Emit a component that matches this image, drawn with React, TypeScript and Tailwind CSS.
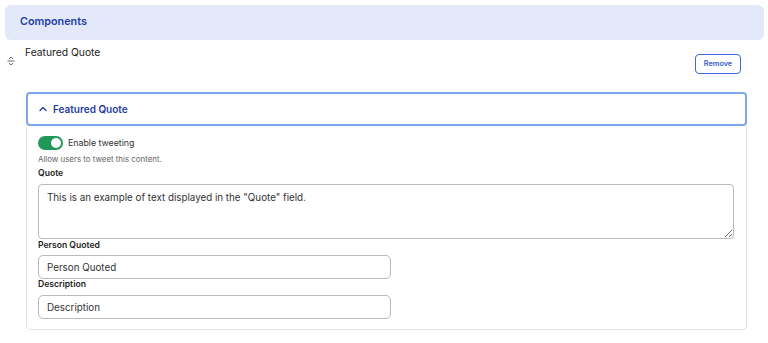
import { useState } from "react";

function DragHandle() {
  return (
    <svg width="10" height="10" viewBox="0 0 10 10" fill="none" stroke="#555" strokeWidth="0.9">
      <path d="M3 3l2-2 2 2" />
      <path d="M1.5 5h7" />
      <path d="M3 7l2 2 2-2" />
    </svg>
  );
}

function Chevron() {
  return (
    <svg width="10" height="10" viewBox="0 0 10 10" fill="none" stroke="#1e3a9f" strokeWidth="1.3" strokeLinecap="round" strokeLinejoin="round">
      <path d="M2 6.5l3-3 3 3" />
    </svg>
  );
}

export default function App() {
  const [tweeting, setTweeting] = useState(true);

  return (
    <div className="w-[768px] h-[343px] bg-white pt-[5px] px-[5px] font-['Inter',sans-serif] text-[#222]">
      <div className="w-[759px] h-[35px] rounded-md bg-[#e3e9f9] flex items-center pl-[15px]">
        <span className="text-[10.8px] font-semibold text-[#1f3fa6]">Components</span>
      </div>

      <div className="flex">
        <div className="w-[20px] pt-[16px] pl-[1px]">
          <DragHandle />
        </div>
        <div className="flex-1">
          <div className="flex items-start justify-between pr-[22px]">
            <span className="text-[10.3px] leading-[15px] pt-[5px]">Featured Quote</span>
            <button className="mt-[14px] w-[46px] h-[20px] rounded-[4px] border border-[#4066e0] text-[7.3px] font-semibold text-[#3558cf] bg-white">
              Remove
            </button>
          </div>

          <div className="mt-[18px] w-[721px] ml-[1px]">
            <div className="h-[34px] rounded-[4px] border-2 border-[#7fa5ee] flex items-center gap-[5px] pl-[10px]">
              <Chevron />
              <span className="text-[10px] font-semibold text-[#1f3a9e]">Featured Quote</span>
            </div>
            <div className="border border-t-0 border-[#e3e3e3] rounded-b-[5px] px-[11px] pt-[10px] pb-[10px]">
              <div className="flex items-center gap-[5px]">
                <button
                  onClick={() => setTweeting(!tweeting)}
                  className="w-[25px] h-[14px] rounded-full bg-[#21985a] flex items-center justify-end pr-[2px]"
                >
                  <span className="w-[10px] h-[10px] rounded-full bg-white" />
                </button>
                <span className="text-[8.8px] text-[#333]">Enable tweeting</span>
              </div>
              <div className="text-[7.9px] text-[#666] mt-[3px] leading-[12px]">Allow users to tweet this content.</div>
              <div className="text-[8.6px] font-semibold text-[#222] mt-[2px] leading-[12px]">Quote</div>
              <textarea
                className="mt-[5px] block w-[696px] h-[55px] rounded-[4px] border border-[#b9b9b9] px-[8px] py-[6px] text-[9.8px] text-[#333] resize-y outline-none"
                defaultValue={'This is an example of text displayed in the "Quote" field.'}
              />
              <div className="text-[8.6px] font-semibold text-[#222] leading-[12px]">Person Quoted</div>
              <input
                className="mt-[4px] block w-[353px] h-[24px] rounded-[5px] border border-[#b9b9b9] px-[8px] text-[9.8px] text-[#333] outline-none"
                defaultValue="Person Quoted"
              />
              <div className="text-[8.6px] font-semibold text-[#222] leading-[10px]">Description</div>
              <input
                className="mt-[6px] block w-[353px] h-[24px] rounded-[5px] border border-[#b9b9b9] px-[8px] text-[9.8px] text-[#333] outline-none"
                defaultValue="Description"
              />
            </div>
          </div>
        </div>
      </div>
    </div>
  );
}
